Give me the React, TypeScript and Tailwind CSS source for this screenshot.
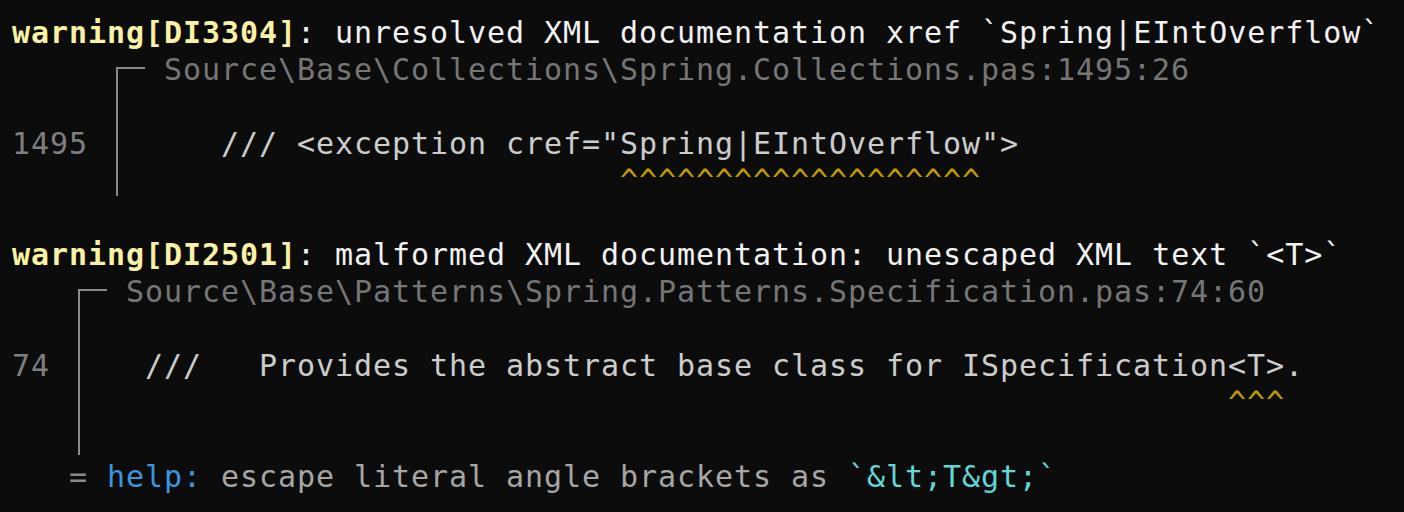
import React from 'react';

// one terminal cell is 19px wide, one row is 37px tall

const Corner: React.FC = () => (
  <>
    <span className="flex w-[19px] flex-col">
      <span className="h-[16px]" />
      <span className="ml-[9px] flex-1 border-l-2 border-t-2 border-[#8a8a8a]" />
    </span>
    <span className="flex w-[19px] flex-col">
      <span className="h-[16px]" />
      <span className="border-t-2 border-[#8a8a8a]" />
    </span>
  </>
);

const Pipe: React.FC<{ last?: boolean }> = ({ last }) => (
  <span className="flex w-[19px]">
    <span className={last ? 'mb-[3px] ml-[9px] w-[2px] bg-[#8a8a8a]' : 'ml-[9px] w-[2px] bg-[#8a8a8a]'} />
  </span>
);

const Row: React.FC<{ children?: React.ReactNode }> = ({ children }) => (
  <div className="flex h-[37px] whitespace-pre leading-[37px]">{children}</div>
);

const Header: React.FC<{ code: string; message: string }> = ({ code, message }) => (
  <Row>
    <span className="font-bold text-[#f9f1a5]">warning[{code}]</span>
    <span className="text-[#f2f2f2]">: {message}</span>
  </Row>
);

const Diagnostics: React.FC = () => {
  return (
    <div className="min-h-screen bg-[#0c0c0c] pl-[12px] pt-[14px] font-['DejaVu_Sans_Mono',monospace] text-[30px] tracking-[0.94px] text-[#cccccc]">
      {/* DI3304 */}
      <Header code="DI3304" message="unresolved XML documentation xref `Spring|EIntOverflow`" />
      <Row>
        <span>{'     '}</span>
        <Corner />
        <span> </span>
        <span className="text-[#767676]">Source\Base\Collections\Spring.Collections.pas:1495:26</span>
      </Row>
      <Row>
        <span>{'     '}</span>
        <Pipe />
      </Row>
      <Row>
        <span className="text-[#7f7f7f]">1495 </span>
        <Pipe />
        <span> </span>
        <span>{'    /// <exception cref="Spring|EIntOverflow">'}</span>
      </Row>
      <Row>
        <span>{'     '}</span>
        <Pipe last />
        <span>{' '.repeat(26)}</span>
        <span className="text-[#c19c00]">{'^'.repeat(19)}</span>
      </Row>
      <Row />

      {/* DI2501 */}
      <Header code="DI2501" message="malformed XML documentation: unescaped XML text `<T>`" />
      <Row>
        <span>{'   '}</span>
        <Corner />
        <span> </span>
        <span className="text-[#767676]">Source\Base\Patterns\Spring.Patterns.Specification.pas:74:60</span>
      </Row>
      <Row>
        <span>{'   '}</span>
        <Pipe />
      </Row>
      <Row>
        <span className="text-[#7f7f7f]">74 </span>
        <Pipe />
        <span> </span>
        <span>{'  ///   Provides the abstract base class for ISpecification<T>.'}</span>
      </Row>
      <Row>
        <span>{'   '}</span>
        <Pipe />
        <span>{' '.repeat(60)}</span>
        <span className="text-[#c19c00]">^^^</span>
      </Row>
      <Row>
        <span>{'   '}</span>
        <Pipe last />
      </Row>
      <Row>
        <span className="text-[#8a8a8a]">{'   = '}</span>
        <span className="text-[#3a96dd]">help:</span>
        <span className="text-[#a6a6a6]"> escape literal angle brackets as </span>
        <span className="text-[#61d6d6]">`&amp;lt;T&amp;gt;`</span>
      </Row>
    </div>
  );
};

export default function App() {
  return <Diagnostics />;
}
